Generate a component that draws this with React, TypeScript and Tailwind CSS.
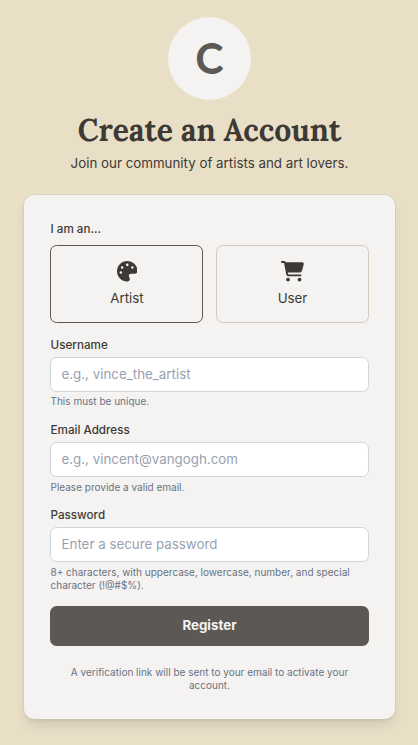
import React from "react";
import { FaCartShopping, FaPalette } from "react-icons/fa6";

function Field({ label, placeholder, hint, type }: { label: string; placeholder: string; hint: string; type: string }) {
  return (
    <div className="mb-[13.33px]">
      <label className="block pl-[0.5px] text-[11.67px] leading-[16.67px] font-medium text-[#3d3a35]">{label}</label>
      <input
        type={type}
        placeholder={placeholder}
        className="mt-[3.33px] block h-[34.9px] w-full rounded-[6.67px] border border-[#d1d5db] bg-white px-[10.5px] pb-[0.6px] text-[13.33px] leading-[20px] placeholder:text-[#99a1af]"
      />
      <p className="mt-[3.7px] pl-[0.5px] text-[10px] leading-[13.33px] text-[#6a7282]">{hint}</p>
    </div>
  );
}

export default function App() {
  return (
    <div className="flex h-[745px] flex-col items-center bg-[#e9dfc7] pt-[17px] pr-[23px] pl-6 font-['Inter',sans-serif] text-[#3d3a35]">
      <div className="size-[83px] shrink-0 rounded-full bg-[#f4f3f1]">
        <svg viewBox="0 0 83 83" className="size-full font-['Lato',sans-serif] text-[40px]">
          <text x="41.4" y="56" textAnchor="middle" fill="#5c5854" stroke="#5c5854" strokeWidth="1.9" strokeLinejoin="round">C</text>
        </svg>
      </div>
      <h1 className="mt-[12px] font-['Lora','Liberation_Serif',serif] text-[30px] leading-[36px] font-bold whitespace-nowrap">Create an Account</h1>
      <p className="mt-[5px] text-[13.33px] leading-[20px] whitespace-nowrap">Join our community of artists and art lovers.</p>
      <main className="mt-[22px] h-[524px] w-[371px] rounded-[10px] bg-[#f4f3f1] px-[26px] pt-[26px] shadow-[0_0_0_1px_rgba(201,195,178,0.4),0_8px_12px_-2px_rgba(0,0,0,0.1),0_3px_5px_-3px_rgba(0,0,0,0.1)]">
        <p className="mb-[7.33px] pl-[0.5px] text-[11.67px] leading-[16.67px] font-medium">I am an...</p>
        <div className="mb-[13.8px] grid grid-cols-2 gap-[13px]">
          <button className="flex h-[78px] flex-col items-center rounded-[6.67px] border border-[#5c5854] pt-[15px]">
            <FaPalette className="ml-px h-[20.5px] w-[20.5px]" />
            <span className="mt-[6.5px] ml-px text-[13.33px] leading-[20px]">Artist</span>
          </button>
          <button className="flex h-[78px] flex-col items-center rounded-[6.67px] border border-[#cfcbbd] pt-[15px]">
            <FaCartShopping className="h-[20.5px] w-[23px]" />
            <span className="mt-[6.5px] text-[13.33px] leading-[20px]">User</span>
          </button>
        </div>
        <Field label="Username" type="text" placeholder="e.g., vince_the_artist" hint="This must be unique." />
        <Field label="Email Address" type="email" placeholder="e.g., vincent@vangogh.com" hint="Please provide a valid email." />
        <Field label="Password" type="password" placeholder="Enter a secure password" hint="8+ characters, with uppercase, lowercase, number, and special character (!@#$%)." />
        <button className="block h-10 w-full rounded-[6.67px] bg-[#5c5854] text-[13.33px] font-bold text-[#f4f3f1]">Register</button>
        <p className="mt-[20px] text-center text-[10px] leading-[13.33px] text-[#6a7282]">A verification link will be sent to your email to activate your account.</p>
      </main>
    </div>
  );
}
